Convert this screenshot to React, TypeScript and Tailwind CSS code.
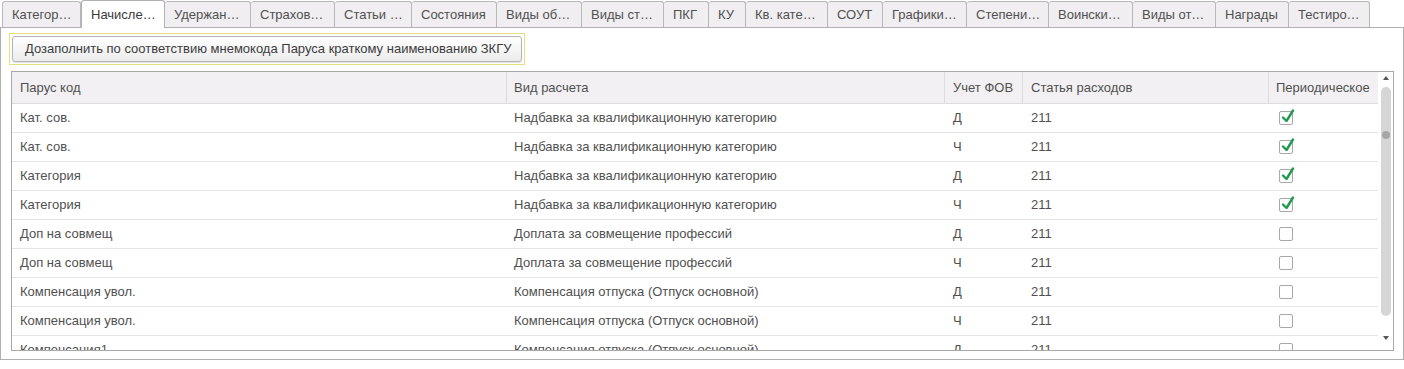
import React from "react"

const tabs = [
  { label: "Категор…", w: 79 },
  { label: "Начисле…", w: 84, active: true },
  { label: "Удержан…", w: 86 },
  { label: "Страхов…", w: 84 },
  { label: "Статьи …", w: 77 },
  { label: "Состояния", w: 85 },
  { label: "Виды об…", w: 85 },
  { label: "Виды ст…", w: 82 },
  { label: "ПКГ", w: 45 },
  { label: "КУ", w: 37 },
  { label: "Кв. кате…", w: 82 },
  { label: "СОУТ", w: 55 },
  { label: "Графики…", w: 84 },
  { label: "Степени…", w: 82 },
  { label: "Воински…", w: 84 },
  { label: "Виды от…", w: 83 },
  { label: "Награды", w: 73 },
  { label: "Тестиро…", w: 81 },
]

const rows = [
  ["Кат. сов.", "Надбавка за квалификационную категорию", "Д", "211", true],
  ["Кат. сов.", "Надбавка за квалификационную категорию", "Ч", "211", true],
  ["Категория", "Надбавка за квалификационную категорию", "Д", "211", true],
  ["Категория", "Надбавка за квалификационную категорию", "Ч", "211", true],
  ["Доп на совмещ", "Доплата за совмещение профессий", "Д", "211", false],
  ["Доп на совмещ", "Доплата за совмещение профессий", "Ч", "211", false],
  ["Компенсация увол.", "Компенсация отпуска (Отпуск основной)", "Д", "211", false],
  ["Компенсация увол.", "Компенсация отпуска (Отпуск основной)", "Ч", "211", false],
  ["Компенсация1", "Компенсация отпуска (Отпуск основной)", "Д", "211", false],
] as const

function Check({ on }: { on: boolean }) {
  return (
    <div className="relative w-[14px] h-[14px] rounded-[2px] border border-[#a8a8a8] bg-white">
      {on && (
        <svg className="absolute left-[1px] top-[-4px]" width="14" height="16" viewBox="0 0 14 16">
          <path d="M2 9.5 L5.5 13 L12 2.5" fill="none" stroke="#1f9a4e" strokeWidth="2.4" strokeLinecap="round" strokeLinejoin="round" />
        </svg>
      )}
    </div>
  )
}

export default function App() {
  return (
    <div
      className="w-[1404px] h-[369px] bg-white text-[13px] text-[#505050] overflow-hidden"
      style={{ fontFamily: '"Liberation Sans", Arial, sans-serif' }}
    >
      {/* tabs */}
      <div className="flex h-[28px] pl-[2px] border-b border-[#b0b0b0]">
        {tabs.map((t) => (
          <div
            key={t.label}
            style={{ width: t.w }}
            className={
              t.active
                ? "h-[28px] mb-[-1px] flex items-center pl-[9px] border border-b-0 border-[#b0b0b0] rounded-t-[3px] bg-white text-[#3a3a3a] whitespace-nowrap"
                : "h-[26px] mt-[1px] flex items-center pl-[9px] border border-l-0 border-[#b8b8b8] border-b-0 rounded-t-[3px] bg-[#f0eef0] whitespace-nowrap first:border-l"
            }
          >
            {t.label}
          </div>
        ))}
      </div>

      {/* panel */}
      <div className="w-[1404px] h-[332px] border-l border-r border-b border-[#b0b0b0] flex flex-col">
        <div className="ml-[8px] mt-[5px] w-[516px] h-[32px] border border-[#e6df7a] p-[2px]">
          <button className="w-full h-full rounded-[3px] border border-[#b4b4b4] bg-gradient-to-b from-white to-[#ececec] text-[13px] text-[#3c3c3c] text-left pl-[12px] shadow-[0_1px_1px_rgba(0,0,0,0.12)]">
            Дозаполнить по соответствию мнемокода Паруса краткому наименованию ЗКГУ
          </button>
        </div>

        {/* table */}
        <div className="ml-[10px] mt-[6px] w-[1383px] h-[280px] border border-[#a8a8a8] flex overflow-hidden">
          <div className="w-[1366px] flex flex-col">
            <div className="flex h-[32px] bg-[#f2f0f2] border-b border-[#dcdcdc] shrink-0">
              <div className="w-[495px] pl-[8px] flex items-center border-r border-[#dcdcdc]">Парус код</div>
              <div className="w-[438px] pl-[7px] flex items-center border-r border-[#dcdcdc]">Вид расчета</div>
              <div className="w-[78px] pl-[8px] flex items-center border-r border-[#dcdcdc]">Учет ФОВ</div>
              <div className="w-[246px] pl-[8px] flex items-center border-r border-[#dcdcdc]">Статья расходов</div>
              <div className="w-[109px] pl-[7px] flex items-center">Периодическое</div>
            </div>
            {rows.map((r, i) => (
              <div key={i} className="flex h-[29px] border-b border-[#e4e4e4] shrink-0">
                <div className="w-[495px] pl-[8px] flex items-center">{r[0]}</div>
                <div className="w-[438px] pl-[7px] flex items-center">{r[1]}</div>
                <div className="w-[78px] pl-[8px] flex items-center">{r[2]}</div>
                <div className="w-[246px] pl-[8px] flex items-center">{r[3]}</div>
                <div className="w-[109px] pl-[10px] flex items-center">
                  <Check on={r[4]} />
                </div>
              </div>
            ))}
          </div>
          {/* scrollbar */}
          <div className="w-[15px] flex flex-col items-center pt-[4px] pb-[4px]">
            <div className="w-0 h-0 border-l-[3px] border-r-[3px] border-b-[4px] border-l-transparent border-r-transparent border-b-[#555]" />
            <div className="relative mt-[7px] w-[10px] h-[229px] rounded-[5px] bg-[#d6d6d6]">
              <div className="absolute left-[1px] top-[44px] w-[8px] h-[8px] rounded-full bg-[#a6a6a6]" />
            </div>
            <div className="flex-1" />
            <div className="mb-[6px] w-0 h-0 border-l-[3px] border-r-[3px] border-t-[4px] border-l-transparent border-r-transparent border-t-[#555]" />
          </div>
        </div>
      </div>
    </div>
  )
}
